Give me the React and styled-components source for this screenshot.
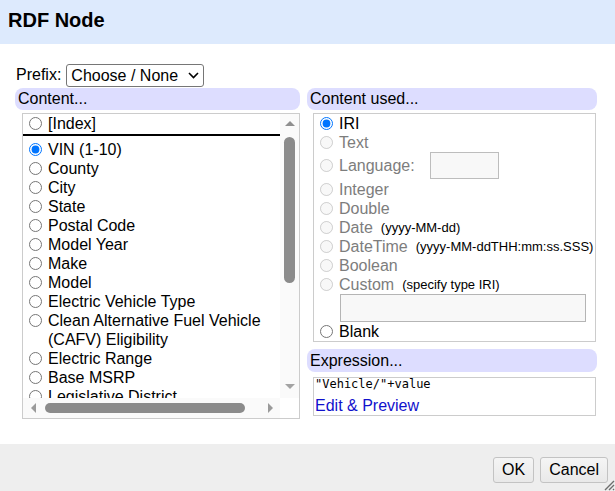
import React from 'react';
import styled, { createGlobalStyle, css } from 'styled-components';

const GlobalStyle = createGlobalStyle`
  html, body { margin: 0; padding: 0; }
  body {
    font-family: "Liberation Sans", Arial, sans-serif;
    font-size: 16px;
    color: #000;
    background: #fff;
  }
  * { box-sizing: border-box; }
`;

const Dialog = styled.div`
  position: relative;
  width: 615px;
  height: 491px;
  display: flex;
  flex-direction: column;
  overflow: hidden;
`;

const Header = styled.div`
  flex: none;
  height: 44px;
  background: #ddeafd;
  display: flex;
  align-items: center;
  padding: 0 8px 4px;
`;

const Title = styled.h1`
  margin: 0;
  font-size: 20px;
  font-weight: bold;
`;

const Body = styled.div`
  flex: 1;
  padding: 20px 18px 0 15px;
`;

const PrefixRow = styled.div`
  display: flex;
  align-items: center;
  gap: 5px;
  height: 22px;
  padding-left: 1px;
`;

const SelectWrap = styled.span`
  position: relative;
  display: inline-flex;
`;

const PrefixSelect = styled.select`
  appearance: none;
  -webkit-appearance: none;
  font-family: "Liberation Sans", Arial, sans-serif;
  font-size: 16px;
  height: 23px;
  width: 138px;
  padding: 0 0 0 4px;
  color: #000;
  background: #fff;
  border: 1px solid #767676;
  border-radius: 3px;
`;

const Chevron = styled.svg`
  position: absolute;
  right: 5px;
  top: 8px;
  pointer-events: none;
`;

const Columns = styled.div`
  display: grid;
  grid-template-columns: 285px 290px;
  column-gap: 7px;
  margin-top: 2px;
`;

const Column = styled.div`
  display: flex;
  flex-direction: column;
`;

const SectionBar = styled.div`
  height: ${(p) => p.$h || 22}px;
  line-height: ${(p) => p.$h || 22}px;
  margin-top: ${(p) => p.$mt || 0}px;
  padding: 0 3px;
  background: #ddddff;
  border-radius: 8px;
`;

/* ---- scrollable column list with its scrollbars ---- */

const ListBox = styled.div`
  margin: 3px 0 0 7px;
  height: 306px;
  border: 1px solid #cccccc;
  display: grid;
  grid-template-columns: 1fr 19px;
  grid-template-rows: 1fr 20px;
`;

const ListViewport = styled.div`
  overflow: hidden;
  min-width: 0;
  min-height: 0;
`;

const ListInner = styled.div`
  width: 273px;
`;

const VScroll = styled.div`
  display: flex;
  flex-direction: column;
  background: #fafafa;
`;

const HScroll = styled.div`
  display: flex;
  align-items: center;
  background: #fafafa;
`;

const Corner = styled.div`
  background: #ffffff;
`;

const ScrollButton = styled.div`
  flex: none;
  display: flex;
  align-items: center;
  justify-content: center;
  ${(p) =>
    p.$vertical
      ? css`
          width: 19px;
          height: 20px;
        `
      : css`
          width: 20px;
          height: 20px;
        `}
  padding-bottom: ${(p) => p.$pb || 0}px;
`;

const Track = styled.div`
  flex: 1;
`;

const VThumb = styled.div`
  width: 11px;
  height: 146px;
  margin: 3px auto 0;
  border-radius: 6px;
  background: #8b8b8b;
`;

const HThumb = styled.div`
  width: 200px;
  height: 10px;
  margin-left: 2px;
  border-radius: 5px;
  background: #8b8b8b;
`;

const arrowShapes = {
  up: css`
    border-width: 0 5px 5px 5px;
    border-color: transparent transparent var(--c) transparent;
  `,
  down: css`
    border-width: 5px 5px 0 5px;
    border-color: var(--c) transparent transparent transparent;
  `,
  left: css`
    border-width: 5px 5px 5px 0;
    border-color: transparent var(--c) transparent transparent;
  `,
  right: css`
    border-width: 5px 0 5px 5px;
    border-color: transparent transparent transparent var(--c);
  `,
};

const Arrow = styled.span`
  --c: ${(p) => p.$color || '#939393'};
  width: 0;
  height: 0;
  border-style: solid;
  ${(p) => arrowShapes[p.$dir]}
`;

/* ---- radio options ---- */

const Option = styled.label`
  display: flex;
  align-items: flex-start;
  line-height: 19px;
  min-height: 19px;
  color: ${(p) => (p.$disabled ? '#7d7d7d' : '#000')};
`;

const IndexOption = styled(Option)`
  line-height: 20px;
  min-height: 20px;
  border-bottom: 2px solid #000;
  margin-bottom: 4px;
`;

const LangOption = styled(Option)`
  align-items: center;
  height: 28px;
  padding-bottom: 1px;
`;

const Radio = styled.input.attrs({ type: 'radio' })`
  flex: none;
  width: 13px;
  height: 13px;
  margin: 3px 6px 0 6px;
`;

const LangRadio = styled(Radio)`
  margin-top: 0;
`;

const Hint = styled.span`
  font-size: 13px;
  color: #000;
  margin-left: 8px;
  align-self: center;
`;

const TypeBox = styled.div`
  margin: 3px 1px 0 6px;
  border: 1px solid #cccccc;
  display: flex;
  flex-direction: column;
`;

const LangInput = styled.input`
  width: 69px;
  height: 27px;
  margin-left: 15px;
  border: 1px solid #bdbdbd;
  background: #f8f8f8;
`;

const CustomInput = styled.input`
  display: block;
  width: 246px;
  height: 28px;
  margin: 0 0 0 26px;
  border: 1px solid #b5b5b5;
  background: #f8f8f8;
`;

const ExprBox = styled.div`
  margin: 5px 1px 0 6px;
  border: 1px solid #cccccc;
`;

const Code = styled.div`
  font-family: "DejaVu Sans Mono", "Liberation Mono", monospace;
  font-size: 12px;
  line-height: 13px;
  padding-left: 1px;
  white-space: pre;
`;

const EditLink = styled.a`
  display: block;
  margin-top: 6px;
  padding-left: 1px;
  line-height: 18px;
  color: #1111cc;
  text-decoration: none;
  cursor: pointer;
`;

const Footer = styled.div`
  flex: none;
  height: 47px;
  background: #eeeeee;
  display: flex;
  justify-content: flex-end;
  align-items: flex-end;
  gap: 6px;
  padding: 0 7px 8px 0;
`;

const Button = styled.button`
  height: 26px;
  min-width: 40px;
  padding: 0 8px;
  font-family: "Liberation Sans", Arial, sans-serif;
  font-size: 16px;
  color: #000;
  background: linear-gradient(#f5f5f5, #e9e9e9);
  border: 1px solid #c3c3c3;
  border-radius: 3px;
`;

const Grip = styled.svg`
  position: absolute;
  right: 0;
  bottom: 0;
`;

const columns = [
  'VIN (1-10)',
  'County',
  'City',
  'State',
  'Postal Code',
  'Model Year',
  'Make',
  'Model',
  'Electric Vehicle Type',
  'Clean Alternative Fuel Vehicle (CAFV) Eligibility',
  'Electric Range',
  'Base MSRP',
  'Legislative District',
  'DOL Vehicle ID',
  'Vehicle Location',
  'Electric Utility',
  '2020 Census Tract',
];

export default function App() {
  return (
    <Dialog>
      <GlobalStyle />
      <Header>
        <Title>RDF Node</Title>
      </Header>
      <Body>
        <PrefixRow>
          <span>Prefix:</span>
          <SelectWrap>
            <PrefixSelect defaultValue="">
              <option value="">Choose / None</option>
            </PrefixSelect>
            <Chevron width="11" height="7" viewBox="0 0 11 7">
              <path d="M1 1 L5.5 5.5 L10 1" fill="none" stroke="#000" strokeWidth="1.6" />
            </Chevron>
          </SelectWrap>
        </PrefixRow>
        <Columns>
          <Column>
            <SectionBar>Content...</SectionBar>
            <ListBox>
              <ListViewport>
                <ListInner>
                  <IndexOption>
                    <Radio name="col" />
                    <span>[Index]</span>
                  </IndexOption>
                  {columns.map((c, i) => (
                    <Option key={c}>
                      <Radio name="col" defaultChecked={i === 0} />
                      <span>{c}</span>
                    </Option>
                  ))}
                </ListInner>
              </ListViewport>
              <VScroll>
                <ScrollButton $vertical $pb={2}>
                  <Arrow $dir="up" $color="#8f8f8f" />
                </ScrollButton>
                <Track>
                  <VThumb />
                </Track>
                <ScrollButton $vertical $pb={4}>
                  <Arrow $dir="down" $color="#a3a3a3" />
                </ScrollButton>
              </VScroll>
              <HScroll>
                <ScrollButton>
                  <Arrow $dir="left" $color="#9a9a9a" />
                </ScrollButton>
                <Track>
                  <HThumb />
                </Track>
                <ScrollButton>
                  <Arrow $dir="right" $color="#9a9a9a" />
                </ScrollButton>
              </HScroll>
              <Corner />
            </ListBox>
          </Column>
          <Column>
            <SectionBar>Content used...</SectionBar>
            <TypeBox>
              <Option>
                <Radio name="type" defaultChecked />
                <span>IRI</span>
              </Option>
              <Option $disabled>
                <Radio name="type" disabled />
                <span>Text</span>
              </Option>
              <LangOption $disabled>
                <LangRadio name="type" disabled />
                <span>Language:</span>
                <LangInput disabled />
              </LangOption>
              <Option $disabled>
                <Radio name="type" disabled />
                <span>Integer</span>
              </Option>
              <Option $disabled>
                <Radio name="type" disabled />
                <span>Double</span>
              </Option>
              <Option $disabled>
                <Radio name="type" disabled />
                <span>Date</span>
                <Hint>(yyyy-MM-dd)</Hint>
              </Option>
              <Option $disabled>
                <Radio name="type" disabled />
                <span>DateTime</span>
                <Hint>(yyyy-MM-ddTHH:mm:ss.SSS)</Hint>
              </Option>
              <Option $disabled>
                <Radio name="type" disabled />
                <span>Boolean</span>
              </Option>
              <Option $disabled>
                <Radio name="type" disabled />
                <span>Custom</span>
                <Hint>(specify type IRI)</Hint>
              </Option>
              <CustomInput disabled />
              <Option>
                <Radio name="type" />
                <span>Blank</span>
              </Option>
            </TypeBox>
            <SectionBar $h={23} $mt={7}>Expression...</SectionBar>
            <ExprBox>
              <Code>"Vehicle/"+value</Code>
              <EditLink>Edit &amp; Preview</EditLink>
            </ExprBox>
          </Column>
        </Columns>
      </Body>
      <Footer>
        <Button>OK</Button>
        <Button>Cancel</Button>
      </Footer>
      <Grip width="12" height="12" viewBox="0 0 12 12">
        <path d="M11 2 L2 11 M11 6 L6 11 M11 10 L10 11" stroke="#6e6e6e" strokeWidth="1.4" />
      </Grip>
    </Dialog>
  );
}
